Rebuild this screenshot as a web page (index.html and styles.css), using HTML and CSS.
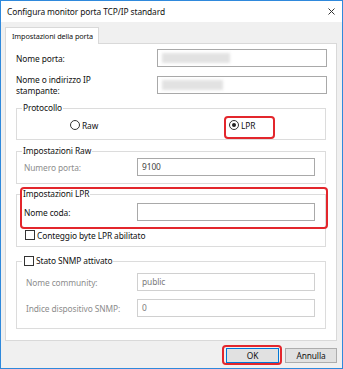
FILE: index.html
```html
<!DOCTYPE html>
<html>
<head>
<meta name="viewport" content="width=device-width, initial-scale=1">
<link rel="stylesheet" href="styles.css">
</head>
<body>

<div class="window">
  <div class="titlebar">
    <span class="title">Configura monitor porta TCP/IP standard</span>
    <svg class="close" width="7" height="7" viewBox="0 0 7 7">
      <path d="M0.5 0.5 L6.5 6.5 M6.5 0.5 L0.5 6.5" stroke="#333" stroke-width="1" fill="none"/>
    </svg>
  </div>

  <div class="content">
    <div class="tabs">
      <div class="tab">Impostazioni della porta</div>
    </div>

    <div class="panel">
      <div class="row">
        <label>Nome porta:</label>
        <div class="input wide"><span class="blur b1"></span></div>
      </div>
      <div class="row">
        <label class="two-lines">Nome o indirizzo IP<br>stampante:</label>
        <div class="input wide"><span class="blur b2"></span></div>
      </div>

      <fieldset class="group">
        <legend>Protocollo</legend>
        <div class="radios">
          <span class="opt opt-raw"><span class="radio"></span>Raw</span>
          <span class="opt opt-lpr"><span class="radio checked"></span>LPR</span>
        </div>
      </fieldset>

      <fieldset class="group group-raw">
        <legend>Impostazioni Raw</legend>
        <div class="field disabled">
          <label>Numero porta:</label>
          <div class="input">9100</div>
        </div>
      </fieldset>

      <div class="marked">
        <fieldset class="group group-lpr">
          <legend>Impostazioni LPR</legend>
          <div class="field">
            <label>Nome coda:</label>
            <div class="input"></div>
          </div>
          <div class="check-row"><span class="checkbox"></span>Conteggio byte LPR abilitato</div>
        </fieldset>
      </div>

      <fieldset class="group group-snmp">
        <legend><span class="checkbox"></span>Stato SNMP attivato</legend>
        <div class="field disabled off">
          <label>Nome community:</label>
          <div class="input">public</div>
        </div>
        <div class="field disabled off">
          <label>Indice dispositivo SNMP:</label>
          <div class="input">0</div>
        </div>
      </fieldset>
    </div>

    <div class="footer">
      <span class="ok-mark"><button class="btn btn-default">OK</button></span>
      <button class="btn">Annulla</button>
    </div>
  </div>
</div>

</body>
</html>
```

FILE: styles.css
```css
* {
  box-sizing: border-box;
}

body {
  margin: 0;
}

.window {
  width: 343px;
  height: 369px;
  border: 1px solid #2f89dc;
  background-color: #f0f0f0;
  font-family: "Noto Sans", sans-serif;
  font-size: 8.4px;
  letter-spacing: -0.1px;
  color: #111;
  display: flex;
  flex-direction: column;
}

.titlebar {
  height: 21px;
  background-color: #fff;
  display: flex;
  align-items: center;
  padding: 0 7px 0 6px;
}

.title {
  font-size: 8.4px;
}

.close {
  margin-left: auto;
}

.content {
  padding: 5px 5px 0 4px;
}

.tabs {
  display: flex;
}

.tab {
  position: relative;
  z-index: 1;
  height: 17px;
  margin-bottom: -1px;
  padding: 0 5px 0 6px;
  font-size: 7.3px;
  line-height: 16px;
  background-color: #fff;
  border: 1px solid #d9d9d9;
  border-bottom: none;
}

.panel {
  height: 298px;
  background-color: #fff;
  border: 1px solid #d9d9d9;
  padding: 5px 9px 0 10px;
}

.row {
  display: flex;
  align-items: center;
  height: 18px;
}

.row + .row {
  margin-top: 9px;
}

.row label {
  flex: 1;
}

.two-lines {
  line-height: 11px;
}

.input {
  height: 18px;
  width: 178px;
  border: 1px solid #a9a9a9;
  background-color: #fff;
  padding: 0 4px;
  line-height: 16px;
  color: #444;
}

.input.wide {
  width: 170px;
  position: relative;
  overflow: hidden;
}

.blur {
  display: block;
  height: 10px;
  margin-top: 3px;
  background-color: #e2e2e2;
  filter: blur(1.5px);
}

.b1 {
  width: 68px;
}

.b2 {
  width: 61px;
}

.group {
  margin: 0 1px 0 0;
  padding: 2px 7px 5px 7px;
  border: 1px solid #dcdcdc;
  min-width: 0;
}

.group legend {
  padding: 0 1px;
  margin-left: -2px;
  line-height: 12px;
}

.panel > .group:first-of-type {
  margin-top: 8px;
}

.radios {
  display: flex;
  height: 18px;
}

.opt {
  display: flex;
  align-items: center;
  height: 18px;
}

.opt-raw {
  margin-left: 46px;
  width: 159px;
}

.opt-lpr {
  position: relative;
}

.opt-lpr::after {
  content: "";
  position: absolute;
  left: -5px;
  top: 0;
  width: 47px;
  height: 19px;
  border: 2px solid #e3262c;
  border-radius: 4px;
}

.radio {
  width: 10px;
  height: 10px;
  border: 1px solid #333;
  border-radius: 50%;
  margin-right: 2px;
  display: flex;
  align-items: center;
  justify-content: center;
}

.radio.checked::before {
  content: "";
  width: 4px;
  height: 4px;
  border-radius: 50%;
  background-color: #222;
}

.group-raw {
  margin-top: 5px;
  padding-top: 1px;
  padding-bottom: 7px;
}

.field {
  display: flex;
  align-items: center;
  height: 18px;
}

.field label {
  width: 113px;
}

.disabled label {
  color: #8d8d8d;
}

.off label {
  padding-left: 2px;
}

.off .input {
  border-color: #d0d0d0;
  color: #7a7a7a;
}

.marked {
  position: relative;
  margin-top: 4px;
}

.marked::after {
  content: "";
  position: absolute;
  left: 4px;
  top: -1px;
  width: 304px;
  height: 38px;
  border: 2px solid #e3262c;
  border-radius: 4px;
}

.group-lpr {
  padding-top: 3px;
  padding-bottom: 5px;
}

.check-row {
  display: flex;
  align-items: center;
  height: 12px;
  margin-top: 8px;
}

.checkbox {
  width: 10px;
  height: 10px;
  border: 1px solid #333;
  background-color: #fff;
  margin: 0 2px 0 1px;
  display: inline-block;
  vertical-align: middle;
}

.group-snmp {
  margin-top: 8px;
  padding-top: 6px;
  padding-bottom: 11px;
}

.group-snmp legend {
  display: flex;
  align-items: center;
}

.group-snmp .field + .field {
  margin-top: 8px;
}

.footer {
  display: flex;
  justify-content: flex-end;
  padding-top: 7px;
}

.btn {
  height: 15px;
  width: 52px;
  padding: 0;
  font-family: "Noto Sans", sans-serif;
  font-size: 8.4px;
  letter-spacing: -0.1px;
  color: #111;
  background-color: #e1e1e1;
  border: 1px solid #adadad;
}

.btn-default {
  width: 53px;
  border-color: #0078d7;
}

.ok-mark {
  position: relative;
  margin-right: 6px;
  display: flex;
}

.ok-mark::after {
  content: "";
  position: absolute;
  left: -4px;
  top: -3px;
  right: -3px;
  bottom: -2px;
  border: 2px solid #e3262c;
  border-radius: 4px;
}
```
